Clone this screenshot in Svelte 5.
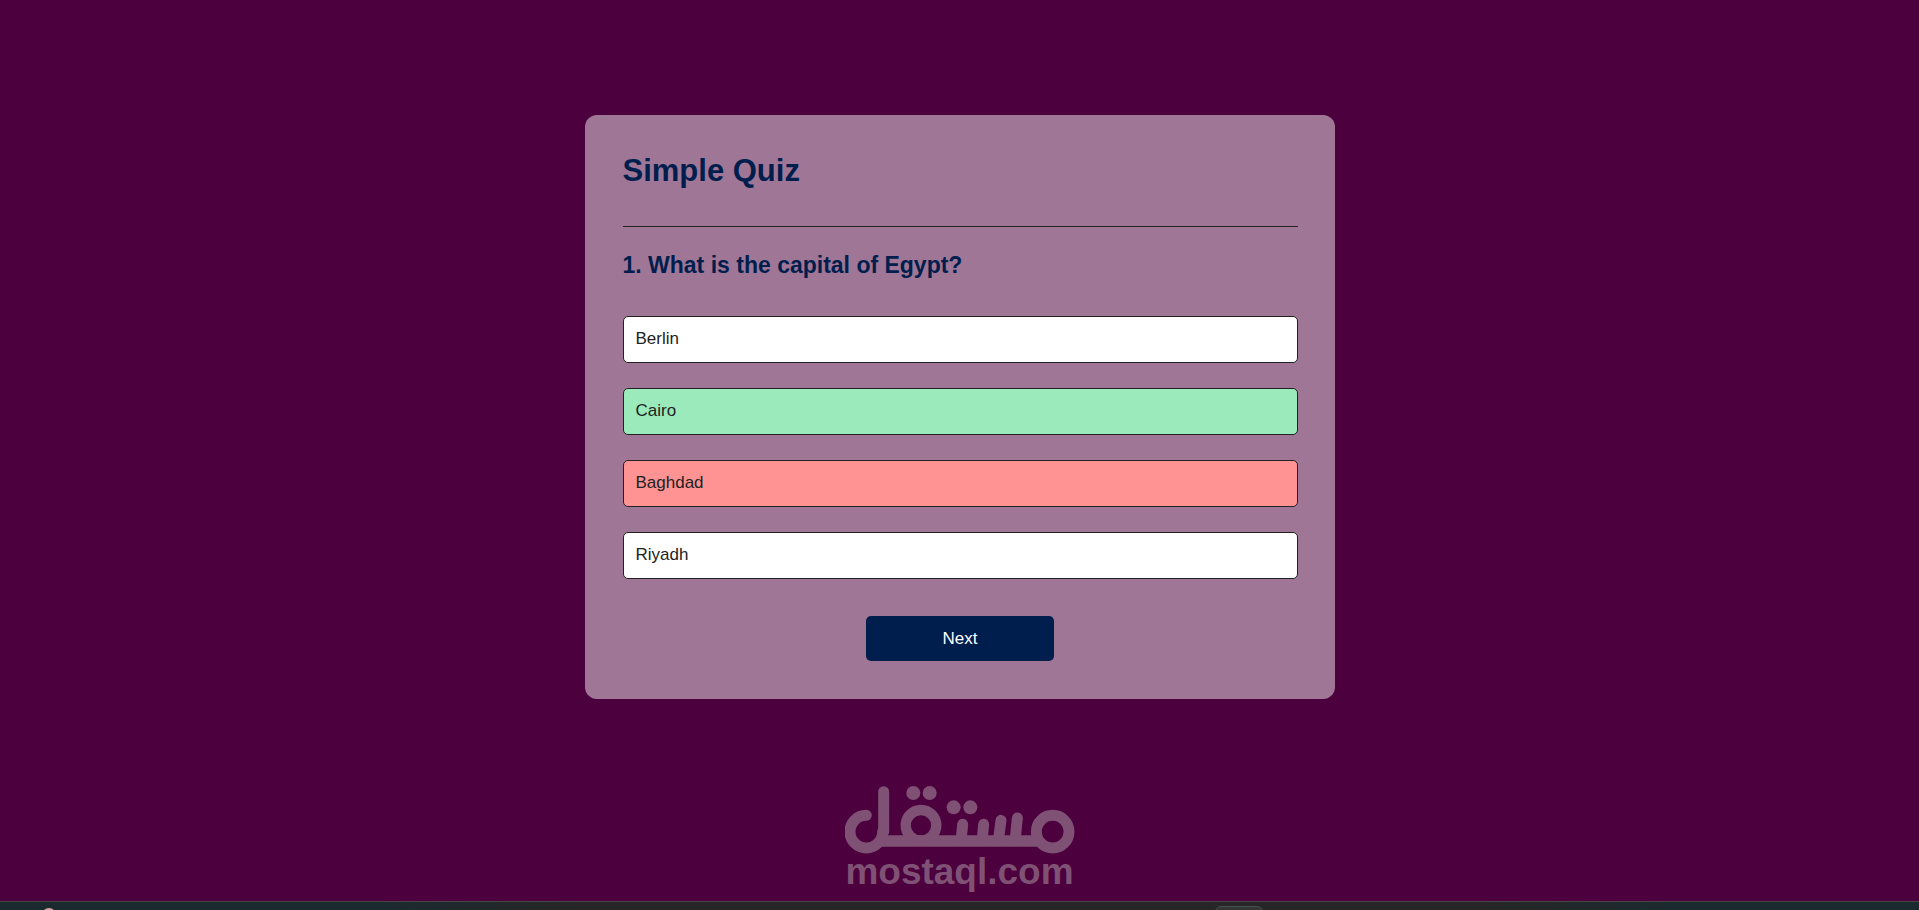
<script lang="ts">
  type Answer = { text: string; correct: boolean };

  const questions: { question: string; answers: Answer[] }[] = [
    {
      question: 'What is the capital of Egypt?',
      answers: [
        { text: 'Berlin', correct: false },
        { text: 'Cairo', correct: true },
        { text: 'Baghdad', correct: false },
        { text: 'Riyadh', correct: false },
      ],
    },
  ];

  let current = $state(0);
  let selected = $state<number | null>(2);

  function answerClass(answer: Answer, index: number): string {
    if (selected === null) return '';
    if (answer.correct) return 'correct';
    return index === selected ? 'incorrect' : '';
  }

  function choose(index: number) {
    if (selected === null) selected = index;
  }

  function next() {
    current = (current + 1) % questions.length;
    selected = null;
  }
</script>

<div class="page">
  <main>
    <div class="quiz-card">
      <h1>Simple Quiz</h1>
      <section class="quiz">
        <h2>{current + 1}. {questions[current].question}</h2>
        <div class="answers">
          {#each questions[current].answers as answer, i}
            <button type="button" class="answer {answerClass(answer, i)}" onclick={() => choose(i)}>
              {answer.text}
            </button>
          {/each}
        </div>
        {#if selected !== null}
          <button type="button" class="next-btn" onclick={next}>Next</button>
        {/if}
      </section>
    </div>
  </main>

  <div class="watermark">
    <svg viewBox="43 33 690 204" width="230" height="68" fill="none" stroke="currentColor" stroke-width="33" stroke-linecap="round" aria-hidden="true">
      <path d="M107 121A49 49 0 1 0 156 170" />
      <path d="M159 170V50" />
      <path d="M150 198H628" stroke-width="34" stroke-linecap="butt" />
      <circle cx="271" cy="151" r="46" stroke-width="31" />
      <path d="M396 148L392 190M459 148L455 190M511 136L504 190M560 129L554 190" />
      <circle cx="666" cy="170" r="49" />
      <g fill="currentColor" stroke="none">
        <circle cx="248" cy="54" r="21" />
        <circle cx="297" cy="54" r="21" />
        <circle cx="369" cy="97" r="21" />
        <circle cx="419" cy="97" r="21" />
      </g>
    </svg>
    <span>mostaql.com</span>
  </div>

  <footer class="taskbar">
    <span class="dot"></span>
    <span class="tab"></span>
  </footer>
</div>

<style>
  :global(body) {
    margin: 0;
    background: #4c003d;
  }

  .page {
    position: relative;
    display: flex;
    flex-direction: column;
    min-height: 100vh;
    font-family: Arial, 'Liberation Sans', sans-serif;
  }

  main {
    flex: 1;
    padding: 115px 24px 24px;
  }

  .quiz-card {
    box-sizing: border-box;
    max-width: 750px;
    margin: 0 auto;
    padding: 38px 37px 38px 38px;
    border-radius: 12px;
    background: #a07696;
  }

  h1 {
    margin: 0;
    padding-bottom: 38px;
    border-bottom: 1px solid #222;
    font-size: 31px;
    line-height: 35px;
    font-weight: 600;
    color: #001e4d;
  }

  h2 {
    margin: 25px 0 38px;
    font-size: 23px;
    line-height: 26px;
    font-weight: 600;
    color: #001e4d;
  }

  .quiz {
    display: flex;
    flex-direction: column;
  }

  .answers {
    display: flex;
    flex-direction: column;
    gap: 25px;
  }

  button {
    font-family: inherit;
    font-size: 17px;
    line-height: 19px;
    cursor: pointer;
    border-radius: 5px;
  }

  .answer {
    padding: 12px 12px 14px;
    border: 1px solid #222;
    background: #fff;
    color: #222;
    text-align: left;
  }

  .correct {
    background: #9aeabc;
  }

  .incorrect {
    background: #ff9393;
  }

  .next-btn {
    width: 188px;
    margin: 37px auto 0;
    padding: 13px;
    border: 0;
    background: #001e4d;
    color: #fff;
    font-weight: 500;
  }

  .watermark {
    position: absolute;
    left: 0;
    right: 0;
    bottom: 20px;
    display: flex;
    flex-direction: column;
    align-items: center;
    color: #7f5174;
    pointer-events: none;
  }

  .watermark span {
    font-size: 37px;
    line-height: 36px;
    font-weight: 700;
  }

  .taskbar {
    position: relative;
    box-sizing: border-box;
    height: 9px;
    overflow: hidden;
    border-top: 1px solid #4b454b;
    background: linear-gradient(90deg, #1b2a2f 20%, #262626 30%, #262626 77%, #1b2a2f 87%);
  }

  .dot {
    position: absolute;
    top: 6px;
    left: 42px;
    width: 14px;
    height: 14px;
    border-radius: 50%;
    background: #d9a3a8;
  }

  .tab {
    position: absolute;
    top: 4px;
    left: 63.3%;
    box-sizing: border-box;
    width: 48px;
    height: 20px;
    border: 1px solid #4a4f50;
    border-radius: 6px;
    background: #323536;
  }
</style>
